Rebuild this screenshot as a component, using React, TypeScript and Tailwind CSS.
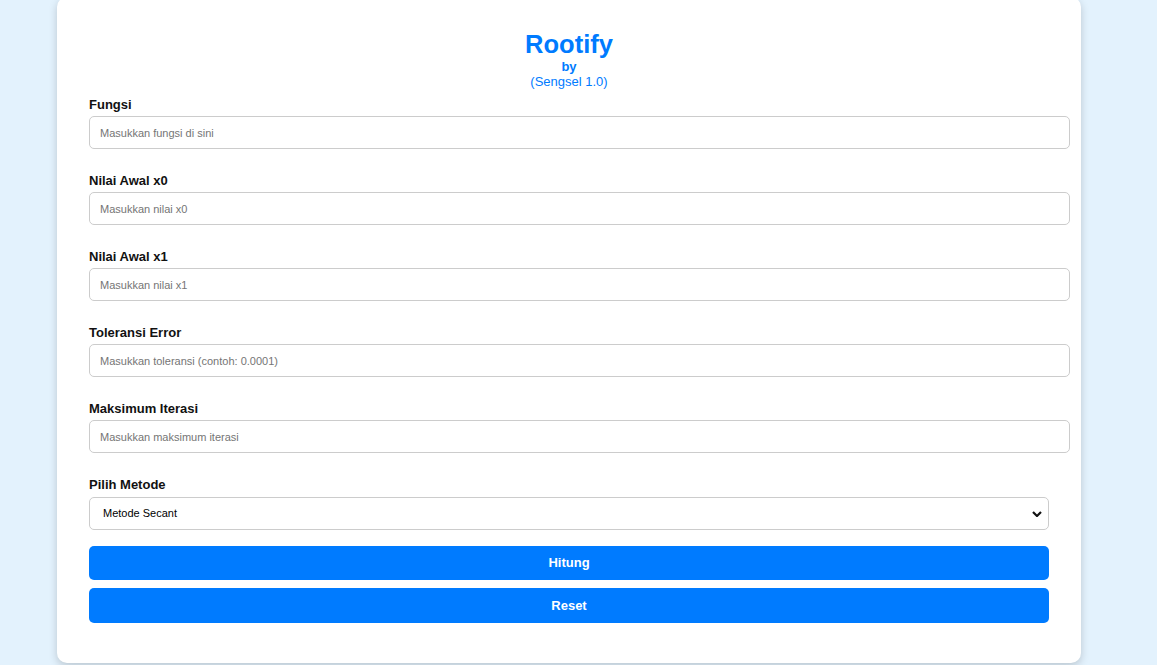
import React, { useState } from "react";

const fields = [
  { label: "Fungsi", placeholder: "Masukkan fungsi di sini" },
  { label: "Nilai Awal x0", placeholder: "Masukkan nilai x0" },
  { label: "Nilai Awal x1", placeholder: "Masukkan nilai x1" },
  { label: "Toleransi Error", placeholder: "Masukkan toleransi (contoh: 0.0001)" },
  { label: "Maksimum Iterasi", placeholder: "Masukkan maksimum iterasi" },
];

const App: React.FC = () => {
  const [metode, setMetode] = useState("secant");

  return (
    <div className="min-h-screen bg-[#e3f2fd] font-['Liberation_Sans',Arial,sans-serif]">
      <div className="ml-[57px] mt-[-3px] w-[1024px] rounded-[10px] bg-white px-[32px] pt-[32px] pb-[40px] shadow-[0_3px_8px_rgba(0,0,0,0.18)]">
        <div className="text-center text-[#007bff]">
          <h1 className="text-[25.5px] leading-[30px] font-bold">Rootify</h1>
          <p className="text-[13px] leading-[15px] font-bold">by</p>
          <p className="text-[13px] leading-[15px]">(Sengsel 1.0)</p>
        </div>

        <div className="mt-[8px]">
          {fields.map((f) => (
            <div key={f.label} className="mb-[24px]">
              <label className="mb-[4px] block text-[13px] leading-[15px] font-bold text-[#111]">
                {f.label}
              </label>
              <input
                type="text"
                placeholder={f.placeholder}
                className="box-border h-[33px] w-[981px] rounded-[5px] border border-[#ccc] px-[10px] text-[11px] text-black placeholder:text-[#757575] focus:outline-none"
              />
            </div>
          ))}

          <div>
            <label className="mb-[5px] block text-[13px] leading-[15px] font-bold text-[#111]">
              Pilih Metode
            </label>
            <div className="relative w-[960px]">
              <select
                value={metode}
                onChange={(e) => setMetode(e.target.value)}
                className="h-[33px] w-full appearance-none rounded-[5px] border border-[#ccc] bg-white pl-[13px] text-[11px] text-black focus:outline-none"
              >
                <option value="secant">Metode Secant</option>
                <option value="newton">Metode Newton-Raphson</option>
                <option value="bisection">Metode Biseksi</option>
              </select>
              <svg
                className="pointer-events-none absolute top-[14px] right-[7px]"
                width="10"
                height="6"
                viewBox="0 0 10 6"
              >
                <path d="M1 1l4 4 4-4" fill="none" stroke="#111" strokeWidth="2.2" />
              </svg>
            </div>
          </div>

          <button className="mt-[16px] block h-[34px] w-[960px] rounded-[5px] bg-[#007bff] text-[13px] font-bold text-white">
            Hitung
          </button>
          <button className="mt-[8px] block h-[35px] w-[960px] rounded-[5px] bg-[#007bff] text-[13px] font-bold text-white">
            Reset
          </button>
        </div>
      </div>
    </div>
  );
};

export default App;
